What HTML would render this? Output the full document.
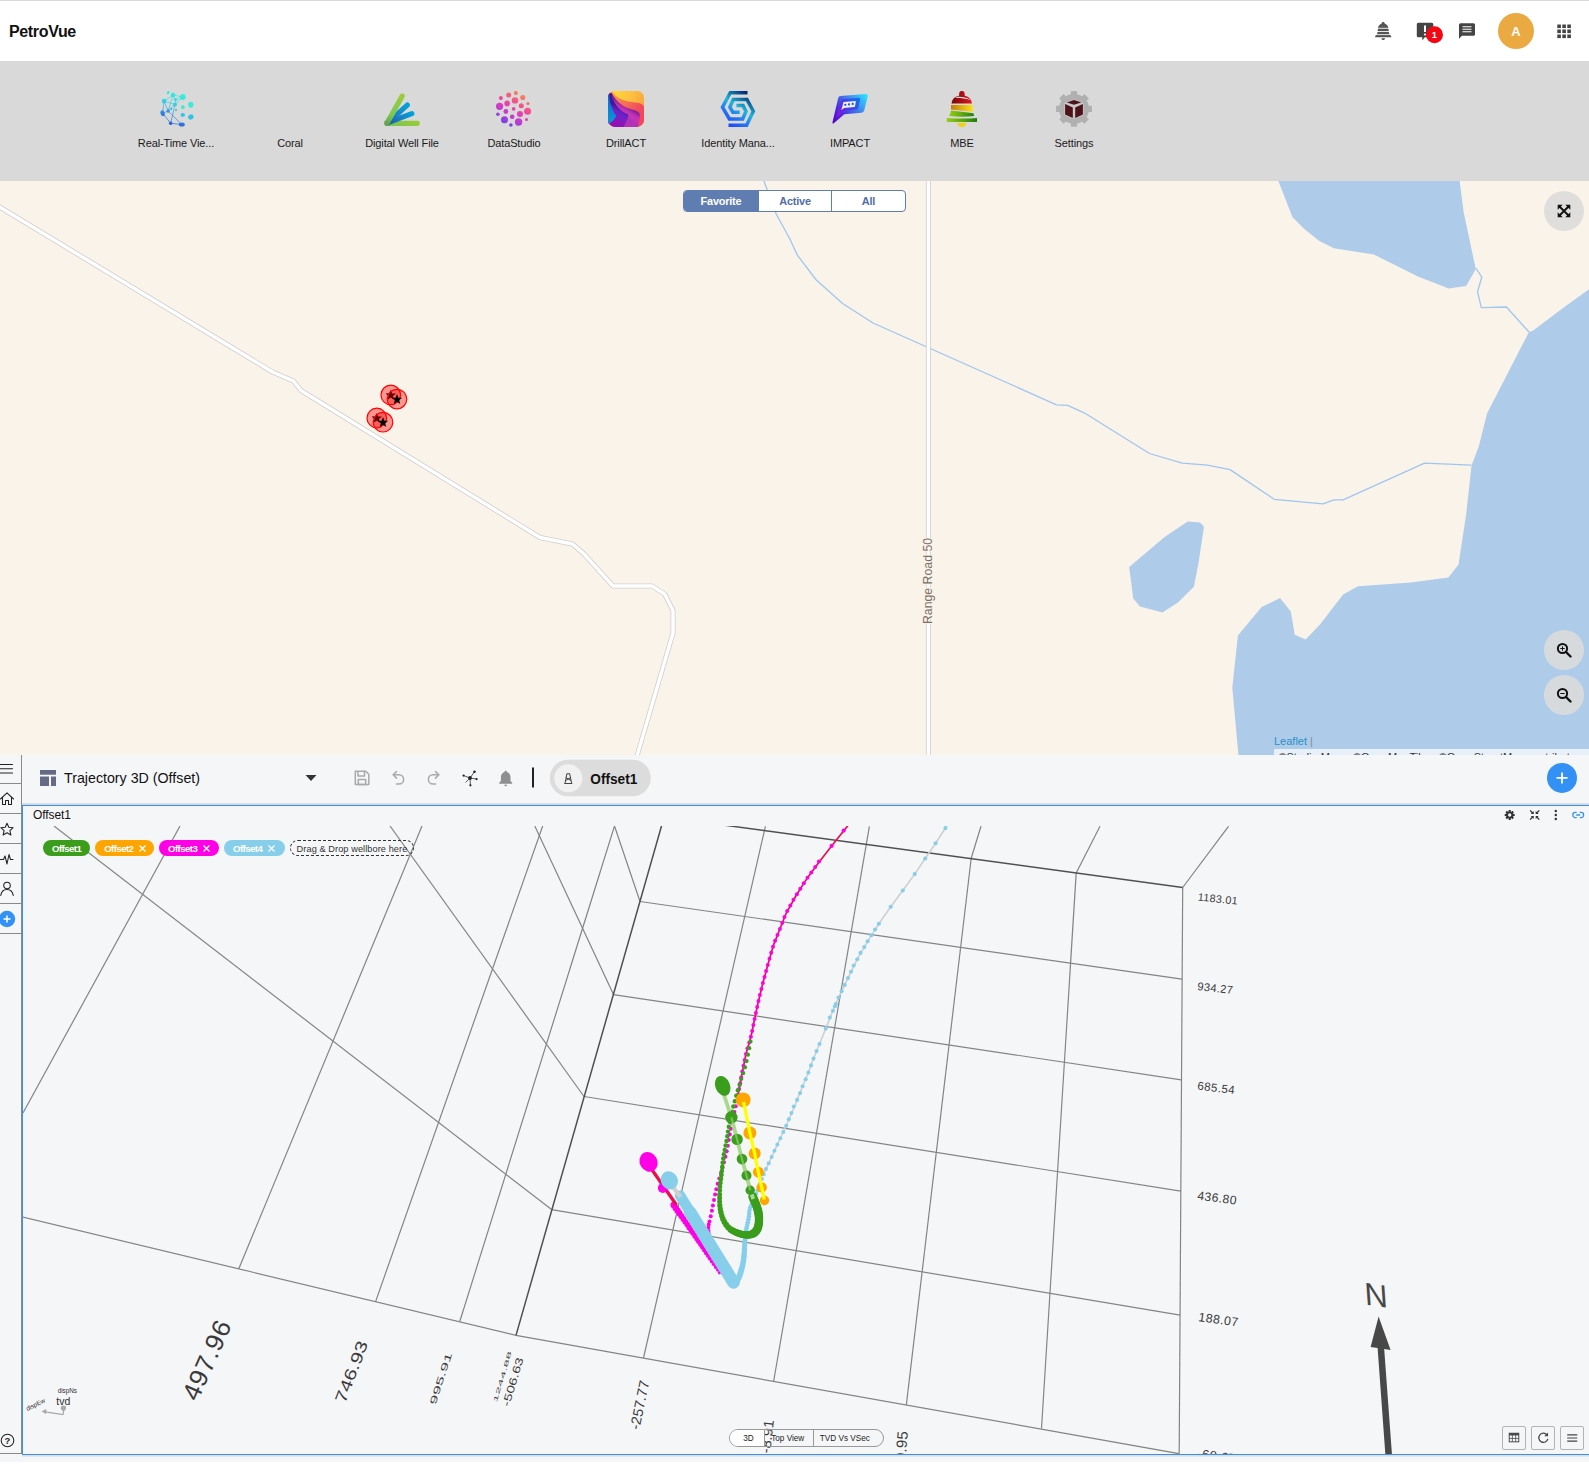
<!DOCTYPE html>
<html lang="en"><head><meta charset="utf-8"><title>PetroVue</title>
<style>
*{box-sizing:border-box}
html,body{margin:0;padding:0}
body{width:1589px;height:1465px;overflow:hidden;background:#fff;font-family:"Liberation Sans",sans-serif;color:#111;position:relative}
.abs{position:absolute}
#hdr{left:0;top:0;width:1589px;height:61px;background:#fff;border-top:1px solid #d9d9d9}
#brand{left:9px;top:21px;font-weight:bold;font-size:16px;letter-spacing:-0.35px;color:#111;line-height:20px}
#apps{left:0;top:61px;width:1589px;height:120px;background:#d9d9d9}
.app{position:absolute;top:1px;width:112px;height:119px;text-align:center}
.app svg{position:absolute;left:38px;top:29px;width:36px;height:36px}
.app span{position:absolute;left:0;width:112px;top:74px;font-size:11px;letter-spacing:-0.12px;line-height:14px;color:#1a1a1a;white-space:nowrap}
#map{left:0;top:181px;width:1589px;height:574px;background:#faf3e9;overflow:hidden}
.mbtn{width:40px;height:40px;border-radius:50%;background:rgba(220,220,220,0.9)}
.mbtn svg{display:block}
.chip{height:16px;border-radius:8px;color:#fff;font-weight:bold;font-size:9.600px;line-height:18px;letter-spacing:-0.550px;white-space:nowrap;padding-left:9px}
.chip svg{margin-left:5.500px;position:relative;top:-0.500px}
#bot{left:0;top:755px;width:1589px;height:710px;background:#f5f6f8}
</style></head><body>
<div id="hdr" class="abs"><div id="brand" class="abs">PetroVue</div>
<svg class="abs" style="left:1370px;top:9px" width="210" height="44" viewBox="1370 10 210 44">
<!-- bell -->
<g fill="#555"><path d="M1383.2 22 c0.9 0 1.5 0.6 1.5 1.4 c2.6 0.9 3.9 3.2 3.9 6 c0 3.4 0.7 5 2.6 6.6 v1.2 h-16 v-1.2 c1.9 -1.600 2.600 -3.200 2.600 -6.600 c0 -2.800 1.300 -5.100 3.900 -6 c0 -0.800 0.600 -1.400 1.500 -1.400 z"/><path d="M1381.400 38.300 h3.600 c0 1 -0.800 1.800 -1.800 1.800 s-1.800 -0.800 -1.800 -1.800z"/></g>
<path d="M1377 28.300 h12.500 M1376.500 31.500 h13.500 M1375.500 34.600 h15.500" stroke="#fff" stroke-width="1" fill="none" opacity="0.85"/>
<!-- alert -->
<path d="M1418.300 22.700 h13.500 q1.500 0 1.500 1.500 v11.500 q0 1.500 -1.500 1.500 h-7 l-2.500 3.300 v-3.300 h-4 q-1.500 0 -1.500 -1.500 v-11.500 q0 -1.500 1.500 -1.500z" fill="#444"/>
<path d="M1425 25.500 v6.500" stroke="#fff" stroke-width="2" /><circle cx="1425" cy="34.500" r="1.100" fill="#fff"/>
<circle cx="1434.500" cy="34.800" r="8.500" fill="#f40612"/>
<text x="1434.500" y="38.300" text-anchor="middle" font-family="Liberation Sans, sans-serif" font-weight="bold" font-size="9.500" fill="#fff">1</text>
<!-- chat -->
<path d="M1460.500 23.200 h13 q1.500 0 1.500 1.500 v9.500 q0 1.500 -1.500 1.500 h-11.500 l-3 3 v-14 q0 -1.500 1.500 -1.500z" fill="#444"/>
<path d="M1462.500 26.800 h9 M1462.500 29.300 h9 M1462.500 31.800 h9" stroke="#fff" stroke-width="1.100"/>
<!-- avatar -->
<circle cx="1516" cy="31" r="18" fill="#eba941"/>
<text x="1516" y="35.800" text-anchor="middle" font-family="Liberation Sans, sans-serif" font-weight="bold" font-size="13" fill="#fff">A</text>
<!-- grid -->
<g fill="#444"><rect x="1557.300" y="24.500" width="3.600" height="3.600"/><rect x="1562.300" y="24.500" width="3.600" height="3.600"/><rect x="1567.300" y="24.500" width="3.600" height="3.600"/><rect x="1557.300" y="29.500" width="3.600" height="3.600"/><rect x="1562.300" y="29.500" width="3.600" height="3.600"/><rect x="1567.300" y="29.500" width="3.600" height="3.600"/><rect x="1557.300" y="34.500" width="3.600" height="3.600"/><rect x="1562.300" y="34.500" width="3.600" height="3.600"/><rect x="1567.300" y="34.500" width="3.600" height="3.600"/></g>
</svg>
</div>
<div id="apps" class="abs">
<svg width="0" height="0" style="position:absolute"><defs>
<linearGradient id="gRT" gradientUnits="userSpaceOnUse" x1="22" y1="3" x2="10" y2="34"><stop offset="0" stop-color="#34f0dc"/><stop offset="0.4" stop-color="#2ccde8"/><stop offset="0.65" stop-color="#2e8fe0"/><stop offset="1" stop-color="#2a58d6"/></linearGradient>
<linearGradient id="gDS" gradientUnits="userSpaceOnUse" x1="28" y1="2" x2="8" y2="34"><stop offset="0" stop-color="#f98c4c"/><stop offset="0.28" stop-color="#f5587e"/><stop offset="0.5" stop-color="#ec3cae"/><stop offset="0.75" stop-color="#b83cd4"/><stop offset="1" stop-color="#6440f2"/></linearGradient>
<linearGradient id="gID" gradientUnits="userSpaceOnUse" x1="7" y1="34" x2="29" y2="2"><stop offset="0" stop-color="#2244ff"/><stop offset="0.3" stop-color="#2478f0"/><stop offset="0.55" stop-color="#1fb6dc"/><stop offset="0.78" stop-color="#0e6aa0"/><stop offset="1" stop-color="#0a1a6a"/></linearGradient>
<linearGradient id="gIM" x1="0" y1="1" x2="1" y2="0"><stop offset="0" stop-color="#6a14c8"/><stop offset="0.35" stop-color="#4a3df0"/><stop offset="0.7" stop-color="#2f7ff8"/><stop offset="1" stop-color="#2fd6f6"/></linearGradient>
<clipPath id="cDA"><rect x="0" y="-0.200" width="36" height="36.100" rx="7"/></clipPath>
<clipPath id="cBell"><path d="M18 4.9 C24.500 4.900 28 8 28.200 13 C28.600 19 29.500 22.500 31 25 L33.200 27 L33.200 30.700 L2.500 30.700 L2.500 27 L4.800 25 C6.300 22.500 7.200 19 7.600 13 C7.800 8 11.500 4.900 18 4.900 Z"/></clipPath>
</defs></svg>

<div class="app" style="left:120px"><svg viewBox="0 0 36 36">
<g stroke="url(#gRT)" stroke-width="0.7" fill="none"><path d="M15 4.1 L24.8 5.9 L17 13.6 L6.100 10.100 L15 4.100 L10.200 20 L4.600 22.200 L6.100 10.100 M17.500 8.600 L24.800 5.900 M17.500 8.600 L15 4.100 M17 13.600 L10.200 20 L23.800 33.500 L12.700 32.300 L4.600 22.200 M17 13.600 L12.700 32.300 M6.100 10.100 L10.200 20 M17.500 8.600 L17 13.600"/></g>
<g fill="url(#gRT)"><ellipse cx="10.2" cy="1.6" rx="1.2" ry="1.7" transform="rotate(25 10.2 1.6)"/><circle cx="15" cy="4.1" r="2.3"/><circle cx="24.8" cy="5.9" r="2.8"/><circle cx="6.1" cy="10.1" r="2.3"/><circle cx="17.5" cy="8.600" r="1.600"/><circle cx="17" cy="13.600" r="2"/><ellipse cx="4.600" cy="22.200" rx="2" ry="3" transform="rotate(-20 4.600 22.200)"/><circle cx="10.200" cy="20" r="1.800"/><circle cx="13.400" cy="18" r="0.900"/><circle cx="18" cy="18.900" r="1"/><circle cx="12.700" cy="32.300" r="1.800"/><ellipse cx="23.800" cy="33.500" rx="3" ry="2"/></g>
<g fill="#38ecd8"><ellipse cx="32.800" cy="13.800" rx="2.600" ry="3"/><circle cx="24.800" cy="16.200" r="1.900"/></g>
<g fill="#2cc4e8"><ellipse cx="24.800" cy="23.900" rx="2.200" ry="1.900"/><ellipse cx="32.800" cy="26" rx="2.800" ry="2.500" transform="rotate(-25 32.800 26)"/></g>
</svg><span>Real-Time Vie...</span></div>

<div class="app" style="left:234px"><span>Coral</span></div>

<div class="app" style="left:346px"><svg viewBox="0 0 36 36"><defs>
<linearGradient id="gW1" gradientUnits="userSpaceOnUse" x1="2" y1="32" x2="34" y2="32"><stop offset="0" stop-color="#78c456"/><stop offset="1" stop-color="#98cc38"/></linearGradient>
<linearGradient id="gW2" gradientUnits="userSpaceOnUse" x1="3" y1="32" x2="18" y2="5"><stop offset="0" stop-color="#6aa650"/><stop offset="0.3" stop-color="#7ec852"/><stop offset="1" stop-color="#9acc3a"/></linearGradient>
<linearGradient id="gW3" gradientUnits="userSpaceOnUse" x1="4" y1="31" x2="23" y2="14"><stop offset="0" stop-color="#1a5ca8"/><stop offset="0.45" stop-color="#1a84c8"/><stop offset="1" stop-color="#00a2d8"/></linearGradient>
<linearGradient id="gW4" gradientUnits="userSpaceOnUse" x1="4" y1="32" x2="28" y2="22"><stop offset="0" stop-color="#1a58a6"/><stop offset="0.45" stop-color="#1a7cc2"/><stop offset="1" stop-color="#00a2d8"/></linearGradient></defs>
<g stroke-linecap="round" stroke-width="5.200" fill="none">
<path d="M3.500 32.300 L33.300 32.300" stroke="url(#gW1)"/>
<path d="M4 31.600 L27.800 22.600" stroke="url(#gW4)"/>
<path d="M4 31.400 L23.300 14.100" stroke="url(#gW3)"/>
<path d="M3.400 31.600 L18.200 5.100" stroke="url(#gW2)"/>
</g>
<path d="M0.300 30.300 L2.600 29.400 L5.400 34.900 L1.800 34.900 L0.300 33.700 Z" fill="#64a44e"/>
</svg><span>Digital Well File</span></div>

<div class="app" style="left:458px"><svg viewBox="0 0 36 36"><g fill="url(#gDS)"><circle cx="19.9" cy="1.9" r="2"/><circle cx="12.7" cy="4.1" r="2.5"/><circle cx="26.8" cy="6.6" r="2.5"/><circle cx="4.9" cy="7.1" r="2"/><circle cx="19" cy="9.4" r="3.2"/><circle cx="11.2" cy="12.4" r="2.8"/><circle cx="32" cy="12.4" r="1.5"/><circle cx="25.3" cy="14.8" r="2.5"/><circle cx="3.6" cy="15.3" r="3.6"/><circle cx="17.7" cy="17.9" r="1.8"/><circle cx="31.6" cy="20.2" r="3.5"/><circle cx="9.9" cy="20.5" r="2.4"/><circle cx="1.9" cy="23.2" r="1.8"/><circle cx="24" cy="23" r="3"/><circle cx="16.2" cy="25.7" r="2.3"/><circle cx="30.5" cy="28.4" r="1.5"/><circle cx="8.5" cy="28.7" r="3.5"/><circle cx="22.6" cy="31" r="3.7"/><circle cx="14.9" cy="34" r="1.8"/></g></svg><span>DataStudio</span></div>

<div class="app" style="left:570px"><svg viewBox="0 0 36 36"><defs>
<linearGradient id="gY" gradientUnits="userSpaceOnUse" x1="8" y1="2" x2="36" y2="12"><stop offset="0" stop-color="#ffd33a"/><stop offset="0.5" stop-color="#fdc040"/><stop offset="1" stop-color="#f9a640"/></linearGradient>
<linearGradient id="gC" gradientUnits="userSpaceOnUse" x1="6" y1="4" x2="34" y2="26"><stop offset="0" stop-color="#fa8c4a"/><stop offset="0.45" stop-color="#f66a58"/><stop offset="0.8" stop-color="#f04a5e"/><stop offset="1" stop-color="#f4485a"/></linearGradient>
<linearGradient id="gM" gradientUnits="userSpaceOnUse" x1="21" y1="15" x2="15" y2="25"><stop offset="0" stop-color="#6a1c8e"/><stop offset="0.35" stop-color="#b02cb0"/><stop offset="0.6" stop-color="#c636b4"/><stop offset="1" stop-color="#b432b8"/></linearGradient>
<linearGradient id="gP" gradientUnits="userSpaceOnUse" x1="14" y1="18" x2="7" y2="30"><stop offset="0" stop-color="#3a1a98"/><stop offset="0.3" stop-color="#6a22c8"/><stop offset="0.7" stop-color="#7c1cc4"/><stop offset="1" stop-color="#9210b6"/></linearGradient>
<linearGradient id="gBl" gradientUnits="userSpaceOnUse" x1="0" y1="10" x2="8" y2="26"><stop offset="0" stop-color="#0a74d6"/><stop offset="1" stop-color="#0a92d6"/></linearGradient>
</defs><g clip-path="url(#cDA)">
<rect width="36" height="36" fill="url(#gY)"/>
<path d="M4.600 1.100 C6 3.500 7.500 5 9.100 6 C11 7.300 13 8.300 15.100 9 C17 9.700 19 10.400 21.200 10.800 C23 11.100 25 11.200 27.200 11.400 C29 11.600 30.500 11.800 31.800 12.300 C33.500 13 35 14 36 15.300 L36 36 L0 36 L0 0 L4 0 Z" fill="url(#gC)"/>
<path d="M3.700 2 C5 4.500 6.200 6.500 7.600 8.100 C9 9.800 10.500 11.300 12.100 12.600 C14 14.100 16 15.500 18.200 16.500 C20 17.300 22 17.800 24.200 18.400 C26 18.900 27.500 19.400 28.700 20.200 C30 21 31 21.700 31.500 22.600 C32 23.500 32 25 31.800 26.200 C31.500 29 30.800 32 30.300 34.700 L30 36 L0 36 L0 2 Z" fill="url(#gM)"/>
<path d="M2.800 2.600 C3.500 5.500 4.400 7.800 5.500 9.600 C6.500 11.800 7.700 13.800 9.100 15.600 C10.500 17.300 12 18.800 13.600 19.900 C15 20.900 16.700 21.700 18.200 22.600 C19.300 23.200 20.300 23.600 20.300 24.400 C20.400 25.500 19.900 26.600 19.400 27.700 C18.300 30.300 17 33 15.800 35.300 L15.500 36 L0 36 L0 2.600 Z" fill="url(#gP)"/>
<path d="M1.300 3.900 C1.600 8 2 11 2.800 14.100 C3.600 17 4.800 19.500 6.100 21.700 C6.900 23 7.800 24 8.200 25 C7.800 26.300 7 27.500 6.100 28.600 C5 30 3.600 31 2.200 32 L0 33.500 L0 3.900 Z" fill="url(#gBl)"/>
</g></svg><span>DrillACT</span></div>

<div class="app" style="left:682px"><svg viewBox="0 0 36 36"><g fill="none" stroke="url(#gID)" stroke-width="3.500" stroke-linejoin="miter" stroke-miterlimit="6">
<path d="M27.500 1.700 L10.300 1.700 L2.500 16.100 L9.400 28 L22.700 28 L26 20.500 L23 14.600 L16.400 14.600"/>
<path d="M8.500 34.200 L26.600 34.200 L33.300 20.200 L26.900 8.500 L13.300 8.500 L9.900 16.100 L12.900 21.200 L19.700 21.200"/>
</g></svg><span>Identity Mana...</span></div>

<div class="app" style="left:794px"><svg viewBox="0 0 36 36"><defs>
<linearGradient id="gIMa" gradientUnits="userSpaceOnUse" x1="2" y1="32" x2="35" y2="3"><stop offset="0" stop-color="#5600d0"/><stop offset="0.3" stop-color="#4a2ee0"/><stop offset="0.55" stop-color="#4470ea"/><stop offset="0.8" stop-color="#38b4f6"/><stop offset="1" stop-color="#2ee8ff"/></linearGradient>
<linearGradient id="gIMb" gradientUnits="userSpaceOnUse" x1="5" y1="26" x2="28" y2="7"><stop offset="0" stop-color="#a010d8"/><stop offset="0.25" stop-color="#6a24e0"/><stop offset="0.6" stop-color="#3a48ec"/><stop offset="1" stop-color="#0a78f2"/></linearGradient></defs>
<path d="M8.500 5 L33.500 2.900 Q36.500 2.800 35.800 5.600 L32.200 19.600 Q31.700 21.600 29.600 21.800 L12.300 23.200 L1.800 32.200 Q0.200 33.200 0.500 31.200 L6.200 7 Q6.700 5.100 8.500 5 Z" fill="url(#gIMa)"/>
<path d="M11 8.300 L26.500 6.800 Q28.600 6.600 28.100 8.600 L26 17.400 Q25.700 18.400 24.700 18.500 L12 20 L4.500 27 Q5.500 22 6.500 18 L9.300 9.800 Q9.700 8.400 11 8.300 Z" fill="url(#gIMb)"/>
<path d="M11.900 11 L23.200 10 Q24 10 23.800 10.700 L23 15.400 Q22.900 16 22.300 16 L12.200 17 L9.200 18.900 L10.400 15.600 L11.200 11.600 Q11.300 11.100 11.900 11 Z" fill="#efefe6"/>
<g fill="#1a5af0"><circle cx="13.300" cy="13.800" r="1.150"/><circle cx="17" cy="13.400" r="1.150"/><circle cx="20.700" cy="12.950" r="1.150"/></g>
</svg><span>IMPACT</span></div>

<div class="app" style="left:906px"><svg viewBox="0 0 36 36"><defs>
<linearGradient id="gB1" gradientUnits="userSpaceOnUse" x1="7" y1="0" x2="28" y2="0"><stop offset="0" stop-color="#76070b"/><stop offset="0.5" stop-color="#a80e14"/><stop offset="1" stop-color="#e21a20"/></linearGradient>
<linearGradient id="gB2" gradientUnits="userSpaceOnUse" x1="7" y1="0" x2="29" y2="0"><stop offset="0" stop-color="#c47c08"/><stop offset="0.5" stop-color="#e0b012"/><stop offset="1" stop-color="#fae410"/></linearGradient>
<linearGradient id="gB3" gradientUnits="userSpaceOnUse" x1="5" y1="0" x2="30" y2="0"><stop offset="0" stop-color="#90ce10"/><stop offset="0.5" stop-color="#62a810"/><stop offset="1" stop-color="#1e8408"/></linearGradient>
<linearGradient id="gB4" gradientUnits="userSpaceOnUse" x1="3" y1="0" x2="33" y2="0"><stop offset="0" stop-color="#96ca18"/><stop offset="0.5" stop-color="#5ea610"/><stop offset="1" stop-color="#1a7e0a"/></linearGradient></defs>
<path d="M13.400 32.100 L22.100 32.100 C22 34.600 20.200 36.200 17.750 36.200 C15.300 36.200 13.500 34.600 13.400 32.100 Z" fill="#f0d40a"/>
<circle cx="17.900" cy="2.700" r="2.750" fill="url(#gB1)"/><path d="M15.600 3 L20.200 3 C20.300 3.900 20.500 4.500 20.900 4.800 C25 5.800 27.600 8.600 27.900 12.600 L7.600 12.600 C7.900 8.600 10.500 5.800 14.900 4.800 C15.300 4.500 15.500 3.900 15.600 3 Z" fill="url(#gB1)"/>
<path d="M12.300 6 C17 5.300 22 6.500 26 8.400 L26.300 9 C22 7.600 16.500 6.600 11.300 6.800 Z" fill="#ececec"/>
<path d="M7 14.100 L28.400 14.100 L29 20.800 L7 18.400 Z" fill="url(#gB2)"/>
<path d="M7 19.500 L29.300 22.300 C29.700 23.300 30 24.200 30.300 25 C22 26 13 26 5.200 25 C6 23.200 6.600 21.400 7 19.500 Z" fill="url(#gB3)"/>
<path d="M2.800 26.900 C12 27.700 24 27.700 33 26.900 L33 31 L2.800 31 Z" fill="url(#gB4)"/>
</svg><span>MBE</span></div>

<div class="app" style="left:1018px"><svg viewBox="0 0 36 36">
<g fill="#b0b0b0"><circle cx="18" cy="17.900" r="14.950"/>
<rect x="14.900" y="0.100" width="6.200" height="5" /><rect x="14.900" y="30.700" width="6.200" height="5"/><rect x="0.100" y="14.800" width="5" height="6.200"/><rect x="30.900" y="14.800" width="5" height="6.200"/>
<g transform="rotate(45 18 17.900)"><rect x="14.900" y="0" width="6.200" height="5" /><rect x="14.900" y="30.800" width="6.200" height="5"/><rect x="0.100" y="14.800" width="5" height="6.200"/><rect x="30.900" y="14.800" width="5" height="6.200"/></g></g>
<path d="M18 8.300 L26.200 11.300 L27.700 12.600 L27.700 24 L19.200 27.800 L16.800 27.800 L8.300 24 L8.300 12.600 L9.800 11.300 Z" fill="#c6c8c8"/>
<g fill="#4e121a"><path d="M18 9 L25.300 11.400 L18 13.800 L10.800 11.400 Z"/><path d="M9.100 13.100 L16.800 16.500 L16.800 27 L9.100 23.600 Z"/><path d="M19.200 16.500 L26.900 13.100 L26.900 23.600 L19.200 27 Z"/></g>
</svg><span>Settings</span></div>
</div>
<div id="map" class="abs">
<svg class="abs" style="left:0;top:0" width="1589" height="574" viewBox="0 181 1589 574">
<g fill="#aeccea" stroke="none">
<path d="M1278 180 L1292.5 217.2 L1304.3 229 L1319.3 241 L1333.9 248.3 L1373.8 254.6 L1418.5 276.7 L1448.7 288.5 L1466.2 286 L1475.8 269.1 L1463.7 212.6 L1459.5 180 Z"/>
<path d="M1589 289.2 L1563 308 L1532.8 330.7 L1529 332 L1487 413.5 L1478.8 446.2 L1471.5 465.5 L1466.2 513.9 L1458.5 564.6 L1448.4 577.6 L1410.8 582.5 L1357.9 586.2 L1343.1 594.5 L1320 624.6 L1305.6 639.4 L1294.8 634.8 L1290.8 611.4 L1280 597.9 L1261.6 607.1 L1237.9 635.4 L1232.3 687.7 L1238.5 756 L1589 756 Z"/>
<path d="M1187.7 521.6 L1200 522.5 L1204 526.8 L1198.5 563.1 L1193.9 586.8 L1177.9 602.5 L1162.5 612.6 L1140 606.5 L1133.2 598.5 L1129.2 567.1 L1164.6 536.9 Z"/>
</g>
<g fill="none" stroke="#9fc6ee" stroke-width="1.3" stroke-linejoin="round">
<path d="M763.6 180 L776.2 214 L790 239.3 L797.5 255.4 L816.3 280 L842.6 303.5 L873 323 L1056.5 404.8 L1067.6 405.3 L1084.2 412.8 L1149.5 453.5 L1182.2 463.1 L1207.4 465.1 L1230 469.6 L1274.2 499.3 L1323 503.8 L1334 499.8 L1343.1 499.8 L1424.6 463.1 L1471.3 465.1"/>
<path d="M1475.8 268 L1481.8 277.2 L1477.5 291.7 L1481.3 307.6 L1506.4 307 L1529 332"/>
</g>
<!-- roads -->
<g fill="none" stroke-linejoin="round" stroke-linecap="butt">
<path id="rd1" d="M-2 206 L273 372.3 L293.5 381 L301 390.5 L540 537.5 L572.5 544 L584 554 L613 586 L652 586 L664.6 594 L673 610.5 L673 633 L637 756" stroke="#cfcfcf" stroke-width="5"/>
<path d="M928.4 180 L928.4 756" stroke="#cfcfcf" stroke-width="5"/>
<path d="M-2 206 L273 372.3 L293.5 381 L301 390.5 L540 537.5 L572.5 544 L584 554 L613 586 L652 586 L664.6 594 L673 610.5 L673 633 L637 756" stroke="#fff" stroke-width="3.4"/>
<path d="M928.4 180 L928.4 756" stroke="#fff" stroke-width="3.4"/>
</g>
<text transform="translate(932 581) rotate(-90)" text-anchor="middle" font-family="Liberation Sans, sans-serif" font-size="12.3" fill="#7a6f66" stroke="#faf3ea" stroke-width="2" paint-order="stroke">Range Road 50</text>
<!-- markers -->
<g><circle cx="390.8" cy="394.9" r="9.8" fill="rgba(255,0,0,0.38)" stroke="#f00" stroke-width="1.2"/><path d="M0 -5.4 L1.35 -1.75 L5.2 -1.7 L2.15 0.7 L3.25 4.5 L0 2.3 L-3.25 4.5 L-2.15 0.7 L-5.2 -1.7 L-1.35 -1.75 Z" transform="translate(390.8 395.2)" fill="#000"/><circle cx="397" cy="399.1" r="9.8" fill="rgba(255,0,0,0.38)" stroke="#f00" stroke-width="1.2"/><path d="M0 -5.4 L1.35 -1.75 L5.2 -1.7 L2.15 0.7 L3.25 4.5 L0 2.3 L-3.25 4.5 L-2.15 0.7 L-5.2 -1.7 L-1.35 -1.75 Z" transform="translate(397 399.40000000000003)" fill="#000"/><circle cx="376.8" cy="418" r="9.8" fill="rgba(255,0,0,0.38)" stroke="#f00" stroke-width="1.2"/><path d="M0 -5.4 L1.35 -1.75 L5.2 -1.7 L2.15 0.7 L3.25 4.5 L0 2.3 L-3.25 4.5 L-2.15 0.7 L-5.2 -1.7 L-1.35 -1.75 Z" transform="translate(376.8 418.3)" fill="#000"/><circle cx="383" cy="422.2" r="9.8" fill="rgba(255,0,0,0.38)" stroke="#f00" stroke-width="1.2"/><path d="M0 -5.4 L1.35 -1.75 L5.2 -1.7 L2.15 0.7 L3.25 4.5 L0 2.3 L-3.25 4.5 L-2.15 0.7 L-5.2 -1.7 L-1.35 -1.75 Z" transform="translate(383 422.5)" fill="#000"/></g>
</svg>
<!-- filter buttons -->
<div class="abs" style="left:683px;top:8.500px;width:222.500px;height:22.500px;border:1px solid #5f7db1;border-radius:4px;background:#fff;overflow:hidden;font-weight:bold;font-size:10.900px;line-height:20.500px;color:#4f6ea8;text-align:center;letter-spacing:-0.2px">
<div class="abs" style="left:0;top:0;width:74px;height:21px;background:#5f7db1;color:#fff">Favorite</div>
<div class="abs" style="left:74px;top:0;width:73px;height:22px;border-left:1px solid #5f7db1">Active</div>
<div class="abs" style="left:147px;top:0;width:74px;height:22px;border-left:1px solid #5f7db1">All</div>
</div>
<!-- map round buttons -->
<div class="abs mbtn" style="left:1544px;top:10px"><svg width="40" height="40" viewBox="0 0 40 40"><path d="M15 15 L25 25 M25 15 L15 25" fill="none" stroke="#111" stroke-width="1.900"/><path d="M13.700 13.700 h5 l-5 5z M26.300 13.700 v5 l-5 -5z M13.700 26.300 v-5 l5 5z M26.300 26.300 h-5 l5 -5z" fill="#111"/></svg></div>
<div class="abs mbtn" style="left:1544px;top:449px"><svg width="40" height="40" viewBox="0 0 40 40"><circle cx="18.5" cy="18.5" r="4.6" fill="none" stroke="#111" stroke-width="2"/><path d="M22 22 L26.5 26.5" stroke="#111" stroke-width="2.4" stroke-linecap="round"/><path d="M16.3 18.5 h4.4 M18.5 16.3 v4.4" stroke="#111" stroke-width="1"/></svg></div>
<div class="abs mbtn" style="left:1544px;top:494px"><svg width="40" height="40" viewBox="0 0 40 40"><circle cx="18.5" cy="18.5" r="4.6" fill="none" stroke="#111" stroke-width="2"/><path d="M22 22 L26.5 26.5" stroke="#111" stroke-width="2.4" stroke-linecap="round"/><path d="M16.3 18.5 h4.4" stroke="#111" stroke-width="1"/></svg></div>
<div class="abs" style="left:1274px;top:553px;font-size:11px;line-height:14px;color:#555;white-space:nowrap"><span style="color:#2a8fc4">Leaflet</span> <span style="color:#8a8a8a">|</span></div>
<div class="abs" style="left:1274px;top:568px;width:315px;height:20px;padding-top:0.700px;background:rgba(255,255,255,0.7);font-size:11px;line-height:14px;color:#333;white-space:nowrap"><span class="abs" style="left:4.4px">©Stadia Maps</span><span class="abs" style="left:79px">©OpenMapTiles</span><span class="abs" style="left:164.700px">©OpenStreetMap</span><span class="abs" style="left:253.600px">contributors</span></div>
</div>
<div id="bot" class="abs">
<!-- sidebar -->
<div class="abs" style="left:0;top:0;width:22px;height:699px;border-right:1px solid #8a8a8a"></div>
<div class="abs" style="left:0;top:698px;width:22px;height:1px;background:#8a8a8a"></div>
<svg class="abs" style="left:0;top:0" width="22" height="700" viewBox="0 755 22 700">
<g stroke="#8a8a8a" stroke-width="1"><path d="M0 783.500 H21 M0 813.500 H21 M0 843.500 H21 M0 873.500 H21 M0 903.500 H21 M0 933.500 H21"/></g>
<g stroke="#222" stroke-width="1.050" fill="none" stroke-linecap="round" stroke-linejoin="round">
<path d="M0 764.500 H12.500 M0 768.800 H12.500 M0 773 H12.500"/>
<path d="M0.500 799 L7 792.800 L13.500 799 M2.500 797.500 V804.500 H5.500 V800.500 H8.500 V804.500 H11.500 V797.500"/>
<path d="M7 823.200 L8.800 827.300 L13.200 827.700 L9.900 830.600 L10.900 835 L7 832.700 L3.100 835 L4.100 830.600 L0.800 827.700 L5.200 827.300 Z"/>
<path d="M0 859.500 H3.500 L5 856 L7 864 L9 854.500 L10.500 859.500 H13"/>
<circle cx="7" cy="885.500" r="3.300"/><path d="M0.800 895.500 C1.500 891 4 889.500 7 889.500 C10 889.500 12.500 891 13.200 895.500"/>
<circle cx="7.500" cy="1440.500" r="6.300" stroke="#222"/>
</g>
<circle cx="7" cy="919" r="8.200" fill="#3390f5"/>
<path d="M3.500 919 H10.500 M7 915.500 V922.500" stroke="#fff" stroke-width="1.500"/>
<text x="7.500" y="1444" text-anchor="middle" font-family="Liberation Sans, sans-serif" font-weight="bold" font-size="9.500" fill="#222">?</text>
</svg>
<!-- toolbar -->
<svg class="abs" style="left:22px;top:0" width="1567" height="50" viewBox="22 755 1567 50">
<rect x="22" y="803.200" width="1567" height="2" fill="#dbd9d6"/>
<g fill="#666b85"><rect x="40" y="770" width="16" height="4.700"/><rect x="40" y="776.500" width="9" height="9.500"/><rect x="51" y="776.500" width="5" height="9.500"/></g>
<text x="64" y="782.500" font-family="Liberation Sans, sans-serif" font-size="14.300" fill="#111" textLength="136" lengthAdjust="spacingAndGlyphs">Trajectory 3D (Offset)</text>
<path d="M305.500 775 h11 l-5.500 6z" fill="#333"/>
<!-- save -->
<g fill="none" stroke="#a9a9a9" stroke-width="1.500" stroke-linejoin="round"><path d="M355.300 771.300 h10.500 l3 3 v10.300 h-13.500z"/><path d="M358 771.500 v4.500 h6.500 v-4.500"/><rect x="358.300" y="779.500" width="7.400" height="5" /></g>
<!-- undo / redo -->
<g fill="none" stroke="#a9a9a9" stroke-width="1.500" stroke-linecap="round" stroke-linejoin="round"><path d="M396.500 771.500 l-3.300 3.300 l3.300 3.300"/><path d="M393.500 774.800 h5.500 a4.500 4.500 0 0 1 0 9.200 h-2.500"/>
<path d="M435.500 771.500 l3.300 3.300 l-3.300 3.300"/><path d="M438.500 774.800 h-5.500 a4.500 4.500 0 0 0 0 9.200 h2.500"/></g>
<!-- network -->
<g stroke="#333" stroke-width="0.800" fill="#222"><path d="M470 778 L463.800 775.700 M470 778 L474.300 772 M470 778 L476.300 779 M470 778 L470.400 785 M470 778 L465.500 782.500" fill="none"/><circle cx="470" cy="778" r="1.900" stroke="none"/><circle cx="463.600" cy="775.600" r="1.100" stroke="none"/><circle cx="474.500" cy="771.800" r="1.300" stroke="none"/><circle cx="476.600" cy="779.100" r="1.100" stroke="none"/><circle cx="470.400" cy="785.300" r="1.100" stroke="none"/></g>
<!-- bell -->
<path d="M505.700 770.800 c0.700 0 1.200 0.500 1.200 1.100 c2.300 0.700 3.600 2.800 3.600 5.400 v3.700 l1.700 1.800 v0.900 h-13 v-0.900 l1.700 -1.800 v-3.700 c0 -2.600 1.300 -4.700 3.600 -5.400 c0 -0.600 0.500 -1.100 1.200 -1.100z M504.200 784.700 h3 c0 0.900 -0.700 1.500 -1.500 1.500 s-1.500 -0.600 -1.500 -1.500z" fill="#8f8f8f"/>
<rect x="532" y="767.500" width="2" height="20" fill="#222"/>
<!-- chip -->
<rect x="549.800" y="759.700" width="101" height="36.600" rx="18.300" fill="#dcdcdc"/>
<circle cx="568.300" cy="778.300" r="14" fill="#f1f1f1"/>
<g stroke="#333" stroke-width="0.900" fill="none"><path d="M566.600 773.800 h3.400 M565 783.300 l1.900 -9.500 M571.600 783.300 l-1.900 -9.500 M565.500 780.500 l5.300 -3 M571.100 780.500 l-5.300 -3 M564.300 783.500 h8"/></g>
<text x="590.300" y="783.800" font-family="Liberation Sans, sans-serif" font-weight="bold" font-size="14.500" fill="#111" textLength="47" lengthAdjust="spacingAndGlyphs">Offset1</text>
<circle cx="1562" cy="777.900" r="15" fill="#3390f5"/>
<path d="M1556.500 777.900 h11 M1562 772.400 v11" stroke="#fff" stroke-width="1.800"/>
</svg>
</div>
<div class="abs" style="left:22px;top:805px;width:1567px;height:650px;border-left:1.5px solid #3390f5;border-top:1.5px solid #3390f5;border-bottom:1.5px solid #3390f5"></div>
<div class="abs" style="left:22px;top:1455px;width:1567px;height:2px;background:linear-gradient(#d9d9d9,#ececec)"></div><div class="abs" style="left:0;top:1462px;width:1589px;height:3px;background:#fff"></div>
<div class="abs" style="left:33px;top:808px;font-size:12px;line-height:15px;color:#111;letter-spacing:-0.1px">Offset1</div>
<svg class="abs" style="left:23px;top:806px" width="1566" height="648" viewBox="23 806 1566 648">
<defs><clipPath id="cv"><rect x="23" y="826" width="1566" height="628.3"/></clipPath></defs>
<g clip-path="url(#cv)">
<g stroke="#848484" stroke-width="1.2" fill="none"><path d="M54 826 L551.6 1209.6"/><path d="M390 826 L584 1096.5"/><path d="M534.8 826 L613.5 994.6"/><path d="M614.5 826 L640 901.5"/><path d="M22.7 1217 L516 1335.4"/><path d="M180 826 L23 1113"/><path d="M422 826 L238.7 1269"/><path d="M542.7 826 L375.6 1301.6"/><path d="M614.5 826 L459.7 1321.8"/><path d="M640 901.5 L1182 979.1"/><path d="M613.5 994.6 L1181.2 1079.8"/><path d="M584 1096.5 L1180.7 1191.1"/><path d="M551.6 1209.6 L1180.2 1315.2"/><path d="M516 1335.4 L1179 1453.7"/><path d="M765.4 826.3 L643.5 1358"/><path d="M869.4 826.3 L773.7 1381"/><path d="M971.2 858.3 L906.3 1405.1"/><path d="M1076.2 872.9 L1041.5 1428.5"/><path d="M1182.7 887.5 L1179.2 1453.7"/><path d="M981 826.3 L971.2 858.3"/><path d="M1100 826.3 L1076.2 872.9"/><path d="M1228.5 826.3 L1182.7 887.5"/></g>
<g stroke="#505050" stroke-width="1.5" fill="none"><path d="M661.5 826 L516 1335.4"/><path d="M723.3 825 L1182.7 887.5"/></g>
<g font-family="Liberation Sans, sans-serif" fill="#3a3a3a"><text transform="translate(1197.5 900.5) rotate(6) scale(1 1)" font-size="10.8" text-anchor="start" letter-spacing="0.3">1183.01</text><text transform="translate(1197 990) rotate(6.5) scale(1 1)" font-size="11.2" text-anchor="start" letter-spacing="0.3">934.27</text><text transform="translate(1197 1089.5) rotate(7) scale(1 1)" font-size="11.6" text-anchor="start" letter-spacing="0.4">685.54</text><text transform="translate(1197 1199.5) rotate(7.5) scale(1 1)" font-size="12.2" text-anchor="start" letter-spacing="0.4">436.80</text><text transform="translate(1198 1321) rotate(8) scale(1 1)" font-size="12.4" text-anchor="start" letter-spacing="0.4">188.07</text><text transform="translate(1197 1457.5) rotate(8.5) scale(1 1)" font-size="12.8" text-anchor="start" letter-spacing="0.4">-60.67</text><text transform="translate(206.6 1359.7) rotate(-66) scale(1.03 1)" x="0" y="9.1" font-size="25.5" text-anchor="middle" letter-spacing="0.8">497.96</text><text transform="translate(351.3 1371.7) rotate(-69) scale(1.31 1)" x="0" y="5.8" font-size="16.2" text-anchor="middle" letter-spacing="0">746.93</text><text transform="translate(440.7 1378.5) rotate(-72) scale(1.92 1)" x="0" y="3.3" font-size="9.2" text-anchor="middle" letter-spacing="0">995.91</text><text transform="translate(502.4 1376.8) rotate(-73.6) scale(2.70 1)" x="0" y="1.9" font-size="5.4" text-anchor="middle" letter-spacing="0">1244.88</text><text transform="translate(512.7 1381.8) rotate(-73.3) scale(1.40 1)" x="0" y="3.8" font-size="10.6" text-anchor="middle" letter-spacing="0">-506.63</text><text transform="translate(639.4 1404.8) rotate(-78.4) scale(1.05 1)" x="0" y="5" font-size="14" text-anchor="middle" letter-spacing="0">-257.77</text><text transform="translate(767 1436.5) rotate(-83.5) scale(1.05 1)" x="0" y="5" font-size="14" text-anchor="middle" letter-spacing="0">-8.91</text><text transform="translate(900.8 1454.5) rotate(-86) scale(1.03 1)" x="0" y="5.3" font-size="14.8" text-anchor="middle" letter-spacing="0">239.95</text></g>
<path d="M848 825.5 L831.6 846 L819 862.3 L807.7 877.4 L796.4 895 L786.3 913 L779.2 930.8 L773.7 944.6 L768.2 963.5 L762.4 984.9 L757.3 1006.3 L753.6 1023.9 L751 1036.5 L746 1054 L741.5 1076 L737.2 1099.4" stroke="#e8104e" stroke-width="1.7" fill="none"/>
<g fill="#ff00e6"><circle cx="843.7" cy="830.6" r="2.1"/><circle cx="831.6" cy="845.9" r="2.1"/><circle cx="819" cy="861.5" r="2.1"/><circle cx="815.2" cy="867.1" r="2"/><circle cx="811.3" cy="872.4" r="2"/><circle cx="807.5" cy="877.8" r="2"/><circle cx="803.8" cy="883.2" r="2"/><circle cx="800.3" cy="888.7" r="2"/><circle cx="796.9" cy="894.3" r="2"/><circle cx="793.5" cy="899.8" r="2"/><circle cx="790.3" cy="905.5" r="2"/><circle cx="787.2" cy="911.1" r="2"/><circle cx="784.5" cy="917" r="2"/><circle cx="782.2" cy="923" r="2"/><circle cx="779.9" cy="928.9" r="2"/><circle cx="777.5" cy="934.9" r="2"/><circle cx="775.1" cy="940.7" r="2"/><circle cx="773" cy="946.7" r="2"/><circle cx="771.2" cy="952.8" r="2"/><circle cx="769.5" cy="958.8" r="2"/><circle cx="767.8" cy="964.9" r="2"/><circle cx="766.1" cy="970.9" r="2"/><circle cx="764.5" cy="976.9" r="2"/><circle cx="762.9" cy="983" r="2"/><circle cx="761.4" cy="989" r="2"/><circle cx="759.9" cy="995" r="2"/><circle cx="758.5" cy="1001" r="2"/><circle cx="757.2" cy="1007" r="2"/><circle cx="755.9" cy="1013" r="2"/><circle cx="754.6" cy="1018.9" r="2"/><circle cx="753.4" cy="1024.9" r="2"/><circle cx="752.2" cy="1030.9" r="2"/><circle cx="750.9" cy="1036.8" r="2"/><circle cx="749.3" cy="1042.6" r="2"/><circle cx="747.5" cy="1048.3" r="2"/><circle cx="746" cy="1054.1" r="2"/><circle cx="744.7" cy="1059.9" r="2"/><circle cx="743.5" cy="1065.8" r="2"/><circle cx="742.3" cy="1071.6" r="2"/><circle cx="741.2" cy="1077.4" r="2"/><circle cx="740.2" cy="1083.2" r="2"/><circle cx="739.1" cy="1089" r="2"/><circle cx="738.1" cy="1094.8" r="2"/><circle cx="737" cy="1100.5" r="2"/><circle cx="735.7" cy="1106.2" r="2"/><circle cx="734.4" cy="1111.9" r="2"/><circle cx="733.1" cy="1117.5" r="2"/><circle cx="732" cy="1123.2" r="2"/><circle cx="730.9" cy="1128.8" r="2"/><circle cx="729.8" cy="1134.5" r="2"/><circle cx="728.8" cy="1140.1" r="2"/><circle cx="727.8" cy="1145.7" r="2"/><circle cx="726.7" cy="1151.3" r="2"/><circle cx="725.5" cy="1156.8" r="2"/><circle cx="724" cy="1162.3" r="2"/><circle cx="722.5" cy="1167.7" r="2"/><circle cx="721" cy="1173.1" r="2"/><circle cx="719.3" cy="1178.5" r="2"/><circle cx="717.7" cy="1183.8" r="2"/><circle cx="716.3" cy="1189.2" r="2"/><circle cx="715.1" cy="1194.6" r="2"/><circle cx="714" cy="1200" r="2"/><circle cx="712.9" cy="1205.4" r="2"/><circle cx="711.9" cy="1210.8" r="2"/><circle cx="710.7" cy="1216.2" r="2"/><circle cx="709.5" cy="1221.5" r="2"/><circle cx="708.7" cy="1224.6" r="2"/><circle cx="708.3" cy="1227.8" r="2"/><circle cx="708.5" cy="1231" r="2"/><circle cx="709" cy="1234.1" r="2"/></g>
<g fill="#ff00e6"><circle cx="673.7" cy="1205.1" r="3.3"/><circle cx="675.7" cy="1207.9" r="3.2"/><circle cx="677.6" cy="1210.6" r="3.2"/><circle cx="679.6" cy="1213.4" r="3.1"/><circle cx="681.6" cy="1216.2" r="3"/><circle cx="683.5" cy="1219" r="3"/><circle cx="685.4" cy="1221.8" r="2.9"/><circle cx="687.3" cy="1224.6" r="2.8"/><circle cx="689.2" cy="1227.4" r="2.8"/><circle cx="691.1" cy="1230.3" r="2.7"/><circle cx="693" cy="1233.1" r="2.7"/><circle cx="694.9" cy="1235.9" r="2.6"/><circle cx="696.7" cy="1238.8" r="2.5"/><circle cx="698.6" cy="1241.6" r="2.5"/><circle cx="700.5" cy="1244.5" r="2.4"/><circle cx="702.4" cy="1247.3" r="2.3"/><circle cx="704.2" cy="1250.1" r="2.3"/><circle cx="706.1" cy="1253" r="2.2"/><circle cx="708" cy="1255.8" r="2.1"/><circle cx="709.9" cy="1258.6" r="2.1"/><circle cx="711.8" cy="1261.4" r="2"/><circle cx="713.8" cy="1264.2" r="1.9"/><circle cx="715.7" cy="1267" r="1.9"/><circle cx="717.7" cy="1269.8" r="1.8"/><circle cx="719.6" cy="1272.6" r="1.8"/></g>
<path d="M651.8 1169.5 L676.5 1205" stroke="#e8104e" stroke-width="3.3" fill="none"/>
<circle cx="662.8" cy="1188" r="4.9" fill="#ff00e6"/>
<ellipse cx="648.6" cy="1161.8" rx="8.8" ry="10.2" transform="rotate(-30 648.6 1161.8)" fill="#ff00e6"/>
<path d="M947.5 825 L945.4 828 L935.6 843.2 L925.2 858.5 L914.7 874.1 L902.8 890.5 L890.7 906.8 L878.9 923.7 L871.4 935.3 L864.3 947.1 L857.3 959.2 L851 971.8 L844.7 984.9 L838.6 997.5 L832.9 1010.8 L825.8 1028.4 L819.5 1044 L813.5 1058.6 L808.4 1072.5 L802.6 1086.3 L797.1 1099.9 L794.5 1106.7 L786.3 1125.5 L777.4 1144.4 L770.9 1158.6 L764.3 1172.8" stroke="#cdcfd1" stroke-width="1.6" fill="none"/>
<g fill="#87ceeb"><circle cx="945.4" cy="828.1" r="2.05"/><circle cx="935.6" cy="843.2" r="2.05"/><circle cx="925.2" cy="858.5" r="2.05"/><circle cx="914.7" cy="874.1" r="2.05"/><circle cx="902.8" cy="890.5" r="2.05"/><circle cx="890.7" cy="906.8" r="2.05"/><circle cx="878.9" cy="923.7" r="2.05"/><circle cx="875.1" cy="929.5" r="2.05"/><circle cx="871.4" cy="935.3" r="2.05"/><circle cx="867.6" cy="941.3" r="2.05"/><circle cx="864.3" cy="947.1" r="2.05"/><circle cx="860.5" cy="952.9" r="2.05"/><circle cx="857.3" cy="959.2" r="2.05"/><circle cx="853.7" cy="965.5" r="2.05"/><circle cx="851" cy="971.8" r="2.05"/><circle cx="848" cy="978.1" r="2.05"/><circle cx="844.7" cy="984.9" r="2.05"/><circle cx="841.7" cy="991.2" r="2.05"/><circle cx="838.6" cy="997.5" r="2.05"/><circle cx="835.9" cy="1004" r="2.05"/><circle cx="834.9" cy="1006.3" r="2.05"/><circle cx="832.9" cy="1010.8" r="2.05"/><circle cx="829.8" cy="1017.6" r="2.05"/><circle cx="825.8" cy="1028.4" r="2.05"/><circle cx="819.5" cy="1044" r="2.05"/><circle cx="816.5" cy="1051.1" r="2.05"/><circle cx="813.5" cy="1058.6" r="2.05"/><circle cx="811" cy="1065.4" r="2.05"/><circle cx="808.4" cy="1072.5" r="2.05"/><circle cx="805.7" cy="1079.3" r="2.05"/><circle cx="802.6" cy="1086.3" r="2.05"/><circle cx="800.1" cy="1093.1" r="2.05"/><circle cx="797.1" cy="1099.9" r="2.05"/><circle cx="793.8" cy="1106.5" r="2.05"/><circle cx="791.4" cy="1112.9" r="2"/><circle cx="788.8" cy="1119.3" r="2"/><circle cx="786.2" cy="1125.7" r="2"/><circle cx="783.3" cy="1132" r="2"/><circle cx="780.4" cy="1138.2" r="2"/><circle cx="777.4" cy="1144.4" r="2"/><circle cx="774.5" cy="1150.7" r="2"/><circle cx="771.6" cy="1157" r="2"/><circle cx="768.7" cy="1163.2" r="2"/><circle cx="766" cy="1168.9" r="2"/><circle cx="763.7" cy="1174.2" r="2"/><circle cx="761.9" cy="1178.9" r="2"/><circle cx="760.2" cy="1183.2" r="2"/><circle cx="758.8" cy="1187.1" r="2"/><circle cx="757.4" cy="1190.6" r="2"/><circle cx="756.2" cy="1193.7" r="2"/><circle cx="755" cy="1196.4" r="2"/><circle cx="753.7" cy="1199.1" r="2"/><circle cx="752.5" cy="1201.9" r="2"/><circle cx="751.3" cy="1204.6" r="2"/><circle cx="750.2" cy="1207.4" r="2.1"/><circle cx="749.5" cy="1210.3" r="2.1"/><circle cx="749.2" cy="1213.3" r="2.2"/><circle cx="749" cy="1216.3" r="2.2"/><circle cx="748.5" cy="1219.3" r="2.3"/><circle cx="747.8" cy="1222.2" r="2.3"/><circle cx="747.2" cy="1225.1" r="2.3"/><circle cx="746.6" cy="1228.1" r="2.4"/><circle cx="746.1" cy="1231" r="2.4"/><circle cx="745.7" cy="1234" r="2.5"/><circle cx="745.3" cy="1237" r="2.5"/><circle cx="745" cy="1239.9" r="2.5"/><circle cx="744.8" cy="1242.9" r="2.6"/><circle cx="744.6" cy="1245.9" r="2.6"/><circle cx="744.4" cy="1248.9" r="2.7"/><circle cx="744.3" cy="1251.9" r="2.7"/><circle cx="744.1" cy="1254.9" r="2.8"/><circle cx="743.8" cy="1257.9" r="2.8"/><circle cx="743.4" cy="1260.9" r="2.8"/><circle cx="742.9" cy="1263.8" r="2.9"/><circle cx="742.2" cy="1266.8" r="2.9"/><circle cx="741.4" cy="1269.7" r="3"/><circle cx="740.6" cy="1272.5" r="3"/><circle cx="739.6" cy="1275.4" r="3"/><circle cx="738.5" cy="1278.1" r="3.1"/><circle cx="737.1" cy="1280.8" r="3.1"/><circle cx="735.6" cy="1283.4" r="3.2"/></g>
<path d="M680.2 1195.7 L728.6 1274.6" stroke="#87ceeb" stroke-width="10.5" stroke-linecap="round" fill="none"/>
<path d="M690 1212 L729.2 1275.5 L733.5 1282.5" stroke="#87ceeb" stroke-width="12.5" stroke-linecap="round" stroke-linejoin="round" fill="none"/>
<path d="M673.7 1188 L680.5 1197" stroke="#d0d0d0" stroke-width="4.2" fill="none"/>
<ellipse cx="669.3" cy="1180.4" rx="8.4" ry="9.4" transform="rotate(-30 669.3 1180.4)" fill="#87ceeb"/>
<g fill="#3a9d1c"><circle cx="750.5" cy="1041.5" r="2.1"/><circle cx="749.2" cy="1048.2" r="2.1"/><circle cx="747.9" cy="1054.7" r="2.1"/><circle cx="746.6" cy="1061.1" r="2.1"/><circle cx="745" cy="1067.3" r="2.1"/><circle cx="743.1" cy="1073.2" r="2.1"/><circle cx="741.2" cy="1079" r="2.1"/><circle cx="739.6" cy="1084.7" r="2.2"/><circle cx="737.9" cy="1090.3" r="2.2"/><circle cx="736.3" cy="1095.8" r="2.2"/><circle cx="734.8" cy="1101.2" r="2.2"/><circle cx="733.3" cy="1106.5" r="2.2"/><circle cx="732" cy="1111.7" r="2.2"/><circle cx="730.8" cy="1116.8" r="2.2"/><circle cx="729.7" cy="1121.8" r="2.2"/><circle cx="728.8" cy="1126.7" r="2.2"/><circle cx="728" cy="1131.6" r="2.2"/><circle cx="727.3" cy="1136.3" r="2.2"/><circle cx="726.5" cy="1141" r="2.2"/><circle cx="725.6" cy="1145.5" r="2.2"/><circle cx="724.7" cy="1149.9" r="2.2"/><circle cx="723.9" cy="1154.3" r="2.2"/><circle cx="723.3" cy="1158.5" r="2.3"/><circle cx="722.7" cy="1162.7" r="2.3"/><circle cx="722.3" cy="1166.9" r="2.3"/><circle cx="721.9" cy="1171" r="2.3"/><circle cx="721.4" cy="1175" r="2.4"/><circle cx="720.9" cy="1179" r="2.4"/><circle cx="720.4" cy="1182.9" r="2.4"/><circle cx="720" cy="1186.8" r="2.4"/><circle cx="719.8" cy="1190.6" r="2.4"/><circle cx="719.6" cy="1194.4" r="2.5"/><circle cx="719.6" cy="1198.1" r="2.5"/><circle cx="719.6" cy="1201.8" r="2.5"/><circle cx="719.8" cy="1205.4" r="2.6"/><circle cx="720.3" cy="1208.9" r="2.6"/><circle cx="720.9" cy="1212.3" r="2.7"/><circle cx="721.8" cy="1215.7" r="2.7"/><circle cx="722.9" cy="1218.9" r="2.8"/><circle cx="724.4" cy="1221.9" r="2.9"/><circle cx="726.1" cy="1224.8" r="3"/><circle cx="728.2" cy="1227.3" r="3.1"/><circle cx="730.6" cy="1229.4" r="3.2"/><circle cx="731.9" cy="1230.3" r="3.2"/><circle cx="733.3" cy="1231.1" r="3.3"/><circle cx="734.7" cy="1231.8" r="3.3"/><circle cx="736.2" cy="1232.5" r="3.4"/><circle cx="737.7" cy="1233" r="3.4"/><circle cx="739.2" cy="1233.5" r="3.5"/><circle cx="740.7" cy="1234" r="3.5"/><circle cx="742.3" cy="1234.4" r="3.6"/><circle cx="743.8" cy="1234.7" r="3.6"/><circle cx="745.4" cy="1234.9" r="3.7"/><circle cx="747" cy="1235" r="3.7"/><circle cx="748.6" cy="1234.9" r="3.8"/><circle cx="750.2" cy="1234.7" r="3.8"/><circle cx="751.7" cy="1234.2" r="3.9"/><circle cx="753.2" cy="1233.6" r="4"/><circle cx="754.5" cy="1232.7" r="4"/><circle cx="755.7" cy="1231.6" r="4.1"/><circle cx="756.6" cy="1230.3" r="4.1"/><circle cx="757.4" cy="1228.9" r="4.1"/><circle cx="758" cy="1227.4" r="4.1"/><circle cx="758.4" cy="1225.9" r="4.1"/><circle cx="758.7" cy="1224.3" r="4.2"/><circle cx="758.9" cy="1222.7" r="4.2"/><circle cx="759" cy="1221.1" r="4.2"/><circle cx="759" cy="1219.5" r="4.2"/><circle cx="759" cy="1217.9" r="4.2"/><circle cx="758.9" cy="1216.3" r="4.2"/><circle cx="758.7" cy="1214.7" r="4.2"/><circle cx="758.4" cy="1213.2" r="4.2"/><circle cx="758.2" cy="1211.6" r="4.3"/><circle cx="757.8" cy="1210" r="4.3"/><circle cx="757.4" cy="1208.5" r="4.3"/><circle cx="756.9" cy="1207" r="4.3"/><circle cx="756.4" cy="1205.5" r="4.3"/><circle cx="755.8" cy="1204" r="4.3"/><circle cx="755.2" cy="1202.5" r="4.3"/><circle cx="754.6" cy="1201" r="4.4"/><circle cx="753.9" cy="1199.5" r="4.4"/><circle cx="753.3" cy="1198.1" r="4.4"/><circle cx="752.7" cy="1196.6" r="4.4"/></g>
<path d="M722.7 1091 L731.4 1117.3 L737.1 1139.4 L742 1159.1 L746.5 1175.5 L750.2 1190.2 L753.3 1199" stroke="#a9d98b" stroke-width="3.8" fill="none" stroke-linejoin="round"/>
<g fill="#3a9d1c"><circle cx="731.4" cy="1117.3" r="6.2"/><circle cx="737.1" cy="1139.4" r="5.7"/><circle cx="742" cy="1159.1" r="5.3"/><circle cx="746.5" cy="1175.5" r="5"/><circle cx="750.2" cy="1190.2" r="4.7"/><ellipse cx="722.7" cy="1085.9" rx="7.3" ry="10.3" transform="rotate(-22 722.7 1085.9)"/></g>
<path d="M731.4 1117.3 L737.1 1139.4 L742 1159.1 L746.5 1175.5 L750.2 1190.2" stroke="#a9d98b" stroke-width="2.2" fill="none" opacity="0.55"/>
<g fill="#ffa500"><circle cx="743.2" cy="1099.8" r="7.4"/><circle cx="749.9" cy="1132.9" r="6.5"/><circle cx="754.7" cy="1153.4" r="6"/><circle cx="758.4" cy="1172.2" r="5.5"/><circle cx="761.7" cy="1187.4" r="5.2"/><circle cx="764.5" cy="1200.5" r="4.7"/></g>
<path d="M743.6 1102 L749.9 1132.9 L754.7 1153.4 L758.4 1172.2 L761.7 1187.4 L764.3 1199.5" stroke="#ffff00" stroke-width="3.3" fill="none" stroke-linejoin="round"/>
<g fill="#484848"><path d="M1378.6 1316.4 L1370.6 1346.9 L1377.6 1348 L1385.4 1455 L1392 1455 L1384.2 1349 L1390.6 1350 Z"/></g>
<text transform="matrix(1 0.15 0.07 1 1375.9 1294.8)" x="0" y="11.500" text-anchor="middle" font-family="Liberation Sans, sans-serif" font-size="32" fill="#484848">N</text>
<g stroke="#a9a9a9" stroke-width="1.2" fill="#a9a9a9"><path d="M63.2 1414.6 L45 1411.8" fill="none"/><path d="M41.5 1411.3 L46.5 1409 L46 1414.2Z" stroke="none"/><path d="M63.2 1414.6 L63.6 1408" fill="none"/><path d="M60.6 1407 L66.2 1406.2 L64 1411.8 Z" stroke="none"/><circle cx="63.4" cy="1408" r="2.6" stroke="none"/></g>
<g font-family="Liberation Sans, sans-serif" fill="#2e2e2e"><text x="67.3" y="1393.3" text-anchor="middle" font-size="6.3">dispNs</text><text x="63.3" y="1405.4" text-anchor="middle" font-size="10.5">tvd</text><text transform="translate(36.5 1406.5) rotate(-27)" text-anchor="middle" font-size="6.3">dispEw</text></g>
</g>
<g fill="#333"><g transform="translate(1509.7 815)"><circle r="3.6" fill="#333"/><g stroke="#333" stroke-width="2.1"><path d="M2.5 0 L5 0"/><path d="M1.8 1.8 L3.5 3.5"/><path d="M0 2.5 L0 5"/><path d="M-1.8 1.8 L-3.5 3.5"/><path d="M-2.5 0 L-5 0"/><path d="M-1.8 -1.8 L-3.5 -3.5"/><path d="M-0 -2.5 L-0 -5"/><path d="M1.8 -1.8 L3.5 -3.5"/></g><circle r="1.7" fill="#f5f6f8"/></g><g transform="translate(1534.7 815)" stroke="#333" stroke-width="1.3" fill="#333"><path d="M-4.6 -4.6 L-1.5 -1.5 M4.6 -4.6 L1.5 -1.5 M-4.6 4.6 L-1.5 1.5 M4.6 4.6 L1.5 1.5" fill="none"/><path d="M-1 -1 h-3 l3 -3z M1 -1 v-3 l3 3z M-1 1 v3 l-3 -3z M1 1 h3 l-3 3z" stroke="none"/></g><circle cx="1555.8" cy="811" r="1.2"/><circle cx="1555.8" cy="815" r="1.2"/><circle cx="1555.8" cy="819" r="1.2"/></g><g transform="translate(1578.2 815)" stroke="#3390f5" stroke-width="1.3" fill="none"><path d="M-1.5 -2.6 h-1.3 a2.6 2.6 0 0 0 0 5.200 h1.3 M1.5 -2.6 h1.3 a2.6 2.6 0 0 1 0 5.200 h-1.3 M-2 0 h4"/></g>
</svg>
<div class="abs chip" style="left:43px;top:840px;width:47px;background:#3a9d1c"><span>Offset1</span></div>
<div class="abs chip" style="left:95.2px;top:840px;width:58.5px;background:#ffa500"><span>Offset2</span><svg width="7" height="7" viewBox="0 0 7 7"><path d="M0.500 0.500 L6.500 6.500 M6.500 0.500 L0.500 6.500" stroke="#fff" stroke-width="1.300"/></svg></div>
<div class="abs chip" style="left:159px;top:840px;width:60px;background:#ff00e6"><span>Offset3</span><svg width="7" height="7" viewBox="0 0 7 7"><path d="M0.500 0.500 L6.500 6.500 M6.500 0.500 L0.500 6.500" stroke="#fff" stroke-width="1.300"/></svg></div>
<div class="abs chip" style="left:224px;top:840px;width:61px;background:#87ceeb"><span>Offset4</span><svg width="7" height="7" viewBox="0 0 7 7"><path d="M0.500 0.500 L6.500 6.500 M6.500 0.500 L0.500 6.500" stroke="#fff" stroke-width="1.300"/></svg></div>
<div class="abs" style="left:290px;top:840px;width:124px;height:16px;border:1px dashed #333;border-radius:8px;font-size:9.200px;line-height:16px;color:#333;text-align:center;white-space:nowrap;letter-spacing:0.080px">Drag &amp; Drop wellbore here</div>
<div class="abs" style="left:729px;top:1429px;width:155px;height:18px;border:1px solid #999;border-radius:9px;overflow:hidden;font-size:8.200px;line-height:18.500px;color:#222;text-align:center;white-space:nowrap"><div class="abs" style="left:0;top:0;width:35.300px;height:16px;background:#fff;border-right:1px solid #999;padding-left:2.800px">3D</div><div class="abs" style="left:35.300px;top:0;width:48.300px;height:16px;border-right:1px solid #999;padding-right:2.400px">Top View</div><div class="abs" style="left:83.600px;top:0;width:69.900px;height:16px;padding-right:7.400px">TVD Vs VSec</div></div>
<div class="abs" style="left:1502px;top:1426px;width:24px;height:24px;border:1px solid #b3b3b3;border-radius:2px"><svg width="22" height="22" viewBox="0 0 23 23" style="display:block"><rect x="6.500" y="6.500" width="10" height="9" fill="none" stroke="#444" stroke-width="1"/><rect x="6.500" y="6.500" width="10" height="2.300" fill="#444"/><path d="M6.500 12 h10 M9.800 8 v7.500 M13.200 8 v7.500" stroke="#444" stroke-width="0.8"/></svg></div>
<div class="abs" style="left:1531px;top:1426px;width:24px;height:24px;border:1px solid #b3b3b3;border-radius:2px"><svg width="22" height="22" viewBox="0 0 23 23" style="display:block"><path d="M15.700 8.300 A4.800 4.800 0 1 0 16.600 12.500" fill="none" stroke="#444" stroke-width="1.300"/><path d="M16.800 5.800 v4 h-4z" fill="#444"/></svg></div>
<div class="abs" style="left:1560px;top:1426px;width:24px;height:24px;border:1px solid #b3b3b3;border-radius:2px"><svg width="22" height="22" viewBox="0 0 23 23" style="display:block"><path d="M6.500 8.300 h10.500 M6.500 11.500 h10.500 M6.500 14.700 h10.500" stroke="#444" stroke-width="1.300"/></svg></div>
</body></html>
